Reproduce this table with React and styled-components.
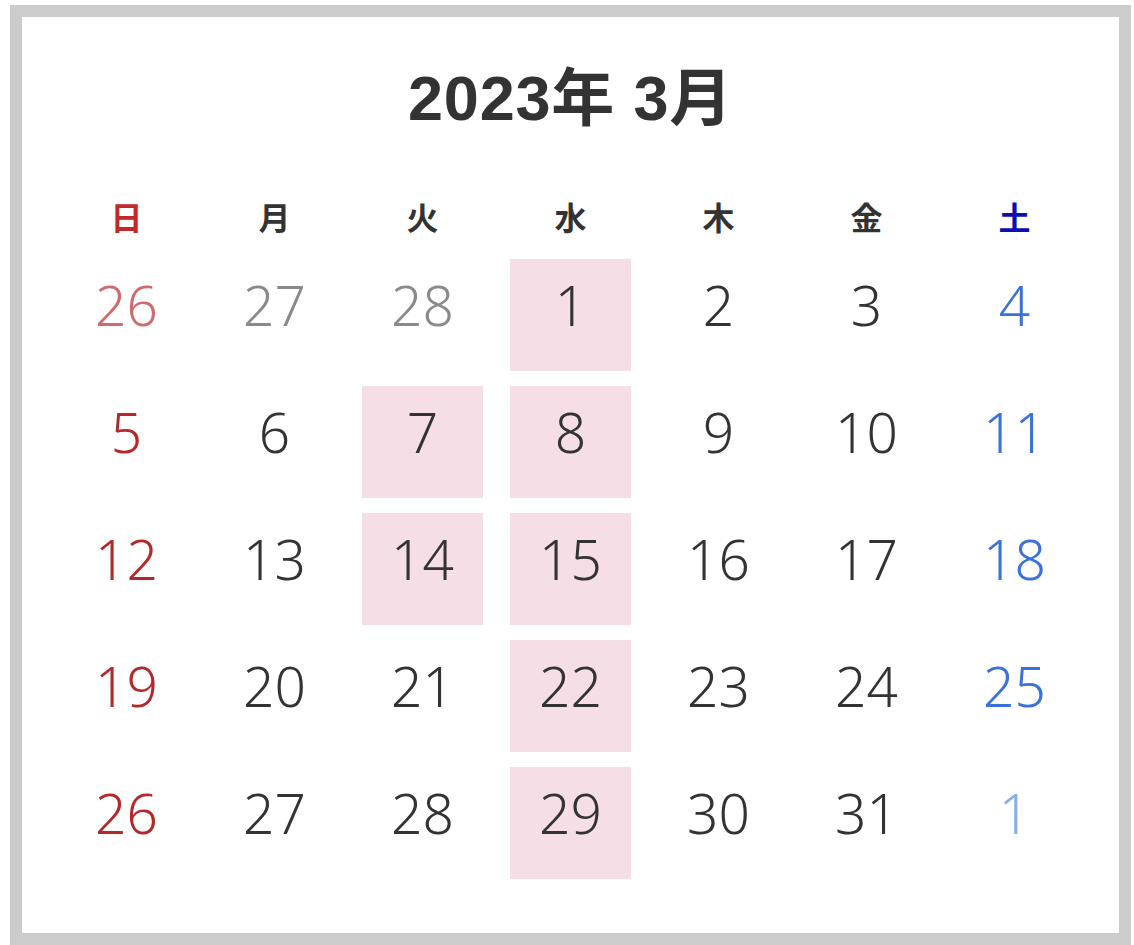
import React from 'react'
import styled, { createGlobalStyle } from 'styled-components'

const GlobalStyle = createGlobalStyle`
  html, body { background: #fff; }
  body {
    margin: 5px 3px 0 10px;
    overflow: hidden;
    font-family: "Noto Sans", "Noto Sans CJK JP", sans-serif;
  }
`

const weekdays = [
  { label: '日', tone: 'sun' },
  { label: '月' },
  { label: '火' },
  { label: '水' },
  { label: '木' },
  { label: '金' },
  { label: '土', tone: 'sat' },
]

// tone: sun / sat / prev / prevSun / nextSat ; mark = pink highlight
const weeks = [
  [{ d: 26, tone: 'prevSun' }, { d: 27, tone: 'prev' }, { d: 28, tone: 'prev' }, { d: 1, mark: true }, { d: 2 }, { d: 3 }, { d: 4, tone: 'sat' }],
  [{ d: 5, tone: 'sun' }, { d: 6 }, { d: 7, mark: true }, { d: 8, mark: true }, { d: 9 }, { d: 10 }, { d: 11, tone: 'sat' }],
  [{ d: 12, tone: 'sun' }, { d: 13 }, { d: 14, mark: true }, { d: 15, mark: true }, { d: 16 }, { d: 17 }, { d: 18, tone: 'sat' }],
  [{ d: 19, tone: 'sun' }, { d: 20 }, { d: 21 }, { d: 22, mark: true }, { d: 23 }, { d: 24 }, { d: 25, tone: 'sat' }],
  [{ d: 26, tone: 'sun' }, { d: 27 }, { d: 28 }, { d: 29, mark: true }, { d: 30 }, { d: 31 }, { d: 1, tone: 'nextSat' }],
]

const headColors = { sun: '#c3282b', sat: '#0d0db5' }
const dayColors = {
  sun: '#b5282a',
  sat: '#3b72d9',
  prev: '#8a8a8a',
  prevSun: '#d06b6d',
  nextSat: '#88aee9',
}

export default function App() {
  return (
    <>
      <GlobalStyle />
      <Frame>
        <Title>2023年 3月</Title>
        <Grid>
          {weekdays.map((w) => (
            <Weekday key={w.label} tone={w.tone}>{w.label}</Weekday>
          ))}
          {weeks.flat().map((c, i) => (
            <Day key={i} tone={c.tone} mark={c.mark}>{c.d}</Day>
          ))}
        </Grid>
      </Frame>
    </>
  )
}

const Frame = styled.div`
  border: 12px solid #cccccc;
  background: #fff;
  padding: 50px 0 54px;
`

const Title = styled.h1`
  margin: 0;
  text-align: center;
  font-family: "Liberation Sans", "Noto Sans CJK JP", sans-serif;
  font-size: 63px;
  line-height: 62px;
  font-weight: 700;
  letter-spacing: 0.8px;
  color: #333;
`

const Grid = styled.div`
  margin-top: 59px;
  display: grid;
  grid-template-columns: repeat(7, 121px);
  grid-template-rows: 56px repeat(5, 112px);
  column-gap: 27px;
  row-gap: 15px;
  justify-content: center;
`

const Weekday = styled.div`
  display: flex;
  align-items: center;
  justify-content: center;
  font-family: "Noto Sans CJK JP", sans-serif;
  font-size: 32px;
  font-weight: 700;
  line-height: 1;
  color: ${(p) => headColors[p.tone] || '#333'};
`

const Day = styled.div`
  display: flex;
  align-items: center;
  justify-content: center;
  padding-bottom: 22px;
  box-sizing: border-box;
  font-size: 55px;
  font-weight: 300;
  line-height: 1;
  color: ${(p) => dayColors[p.tone] || '#333'};
  background: ${(p) => (p.mark ? '#f5dee5' : 'transparent')};
`
